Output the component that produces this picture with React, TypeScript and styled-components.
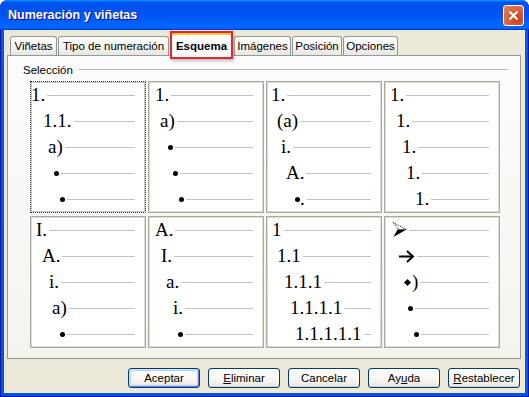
import React from 'react';
import styled, { createGlobalStyle } from 'styled-components';

const GlobalStyle = createGlobalStyle`
  html, body {
    margin: 0;
    padding: 0;
    background: #ffffff;
  }
  body {
    width: 529px;
    height: 397px;
    overflow: hidden;
  }
  * {
    box-sizing: border-box;
  }
`;

const Window = styled.div`
  width: 529px;
  height: 397px;
  display: flex;
  flex-direction: column;
  border-radius: 8px 8px 0 0;
  overflow: hidden;
  background: #0b52dc;
  box-shadow: inset 1px 0 #0019a8, inset -1px 0 #0019a8, inset 0 -1px #0019a8;
  font-family: 'Liberation Sans', Arial, sans-serif;
  font-size: 11px;
  color: #000000;
`;

const TitleBar = styled.div`
  flex: none;
  height: 30px;
  display: flex;
  align-items: center;
  justify-content: space-between;
  padding: 0 5px 0 8px;
  background: linear-gradient(180deg, #0997ff, #0053ee 8%, #0050ee 40%, #0066ff 88%, #0066ff 93%, #005bff 95%, #003dd7 96%, #003dd7);
`;

const Title = styled.div`
  color: #ffffff;
  font-weight: bold;
  font-size: 12.5px;
  text-shadow: 1px 1px #0f1089;
  padding-bottom: 1px;
`;

const CloseButton = styled.div`
  width: 21px;
  height: 21px;
  margin-top: 1px;
  border: 1px solid #ffffff;
  border-radius: 3px;
  display: flex;
  align-items: center;
  justify-content: center;
  background: radial-gradient(circle at 70% 70%, #c53f0f 0%, #db6444 55%, #e9845f 100%);
`;

const Frame = styled.div`
  flex: 1;
  display: flex;
  flex-direction: column;
  margin: 0 4px 4px 4px;
  padding: 0 4px 0 3px;
  background: #ece9d8;
`;

const TabStrip = styled.div`
  flex: none;
  height: 26px;
  margin-bottom: -1px;
  display: flex;
  align-items: flex-end;
  gap: 1px;
  padding-left: 3px;
  position: relative;
  z-index: 1;
`;

const Tab = styled.div<{ $w: number; $active?: boolean }>`
  position: relative;
  width: ${p => p.$w}px;
  height: ${p => (p.$active ? 24 : 19)}px;
  margin-bottom: ${p => (p.$active ? 0 : 1)}px;
  display: flex;
  align-items: center;
  justify-content: center;
  padding-top: ${p => (p.$active ? 2 : 0)}px;
  border: 1px solid #919b9c;
  border-bottom: none;
  border-radius: 3px 3px 0 0;
  white-space: nowrap;
  font-size: 11.5px;
  font-weight: ${p => (p.$active ? 'bold' : 'normal')};
  background: ${p => (p.$active ? '#fcfcfe' : 'linear-gradient(#ffffff, #f3f3ef 60%, #e6e5de)')};
  border-top-color: ${p => (p.$active ? '#e68b2c' : '#919b9c')};
  box-shadow: ${p => (p.$active ? 'inset 0 2px #ffc83c' : 'none')};
`;

// red annotation box drawn over the active tab
const Highlight = styled.span`
  position: absolute;
  left: -1px;
  right: -1px;
  top: -2px;
  bottom: -3px;
  border: 2px solid #e3262a;
  box-shadow: 1px 2px 3px rgba(0, 0, 0, 0.25);
  pointer-events: none;
`;

const Panel = styled.div`
  flex: 1;
  display: flex;
  flex-direction: column;
  border: 1px solid #919b9c;
  background: linear-gradient(#fcfcfe, #f4f3ee);
  padding: 7px 12px 0 15px;
`;

const FixedLine = styled.div`
  height: 13px;
  display: flex;
  align-items: center;
  gap: 6px;
  font-size: 11.5px;
`;

const FixedRule = styled.span`
  flex: 1;
  height: 1px;
  background: #b8b8b0;
`;

const Grid = styled.div`
  margin: 5px 0 0 7px;
  display: grid;
  grid-template-columns: repeat(4, 116px);
  grid-auto-rows: 132px;
  column-gap: 2px;
  row-gap: 3px;
`;

const Cell = styled.div<{ $selected?: boolean }>`
  background: #ffffff;
  border: 1px ${p => (p.$selected ? 'dotted #303030' : 'solid #aaa99f')};
  box-shadow: inset 0 0 0 1px ${p => (p.$selected ? '#c8c6bc' : '#dddbd2')};
`;

const Row = styled.div<{ $indent: number }>`
  height: 26px;
  display: flex;
  align-items: center;
  padding-left: ${p => p.$indent}px;
  padding-right: 10px;
`;

const Marker = styled.span`
  display: inline-flex;
  align-items: center;
  font-family: 'Liberation Serif', 'Times New Roman', serif;
  font-size: 19px;
  line-height: 26px;
  white-space: nowrap;
`;

const Rule = styled.span`
  flex: 1;
  height: 1px;
  margin-left: 2px;
  background: #c4c4c4;
`;

const Dot = styled.span`
  width: 5px;
  height: 5px;
  border-radius: 50%;
  background: #000000;
`;

const Diamond = styled.span`
  width: 5px;
  height: 5px;
  margin: 0 2px 0 1px;
  background: #000000;
  transform: rotate(45deg);
`;

const ButtonRow = styled.div`
  flex: none;
  height: 34px;
  display: flex;
  justify-content: flex-end;
  align-items: flex-start;
  gap: 8px;
  padding: 9px 1px 0 0;
`;

const Button = styled.button<{ $default?: boolean }>`
  width: 72px;
  height: 20px;
  padding: 0;
  border: 1px solid #003c74;
  border-radius: 3px;
  font-family: 'Liberation Sans', Arial, sans-serif;
  font-size: 11.5px;
  color: #000000;
  background: linear-gradient(#ffffff, #f5f4ef 70%, #e3e1d6);
  box-shadow: ${p =>
    p.$default
      ? 'inset 1px 1px #cee7ff, inset -1px -1px #6982ee, inset 0 0 0 2px #b9d1f7'
      : 'inset 0 -1px #d6d0c5'};
`;

const ArrowHead = () => (
  <svg width="15" height="16" viewBox="0 0 15 16">
    <path d="M1 0.5 L14.5 7.5 L7 8 Z" fill="none" stroke="#000" strokeWidth="0.9" strokeDasharray="1 1" />
    <path d="M5.5 7.6 L14.5 7.5 L1.5 15 Z" fill="#000" />
  </svg>
);

const Arrow = () => (
  <svg width="17" height="13" viewBox="0 0 17 13">
    <path d="M1 6.5 H15 M9 1 L15 6.5 L9 12" fill="none" stroke="#000" strokeWidth="2" />
  </svg>
);

type Item = [number, React.ReactNode];

const presets: Item[][] = [
  [[0, '1.'], [12, '1.1.'], [17, 'a)'], [23, <Dot />], [29, <Dot />]],
  [[6, '1.'], [11, 'a)'], [19, <Dot />], [24, <Dot />], [30, <Dot />]],
  [[4, '1.'], [10, '(a)'], [14, 'i.'], [19, 'A.'], [28, <><Dot />.</>]],
  [[5, '1.'], [11, '1.'], [17, '1.'], [21, '1.'], [30, '1.']],
  [[5, 'I.'], [11, 'A.'], [18, 'i.'], [21, 'a)'], [29, <Dot />]],
  [[6, 'A.'], [12, 'I.'], [17, 'a.'], [24, 'i.'], [29, <Dot />]],
  [[5, '1'], [10, '1.1'], [17, '1.1.1'], [23, '1.1.1.1'], [28, '1.1.1.1.1']],
  [[7, <ArrowHead />], [13, <Arrow />], [19, <><Diamond />)</>], [23, <Dot />], [29, <Dot />]],
];

const tabs: { label: string; w: number; active?: boolean }[] = [
  { label: 'Viñetas', w: 47 },
  { label: 'Tipo de numeración', w: 111 },
  { label: 'Esquema', w: 63, active: true },
  { label: 'Imágenes', w: 57 },
  { label: 'Posición', w: 50 },
  { label: 'Opciones', w: 55 },
];

export default function App() {
  return (
    <>
      <GlobalStyle />
      <Window>
        <TitleBar>
          <Title>Numeración y viñetas</Title>
          <CloseButton>
            <svg width="11" height="11" viewBox="0 0 11 11">
              <path d="M1.5 1.5 L9.5 9.5 M9.5 1.5 L1.5 9.5" stroke="#fff" strokeWidth="2.2" />
            </svg>
          </CloseButton>
        </TitleBar>
        <Frame>
          <TabStrip>
            {tabs.map(t => (
              <Tab key={t.label} $w={t.w} $active={t.active}>
                {t.label}
                {t.active && <Highlight />}
              </Tab>
            ))}
          </TabStrip>
          <Panel>
            <FixedLine>
              <span>Selección</span>
              <FixedRule />
            </FixedLine>
            <Grid>
              {presets.map((rows, i) => (
                <Cell key={i} $selected={i === 0}>
                  {rows.map(([indent, mark], j) => (
                    <Row key={j} $indent={indent}>
                      <Marker>{mark}</Marker>
                      <Rule />
                    </Row>
                  ))}
                </Cell>
              ))}
            </Grid>
          </Panel>
          <ButtonRow>
            <Button $default>Aceptar</Button>
            <Button><u>E</u>liminar</Button>
            <Button>Cancelar</Button>
            <Button>Ay<u>u</u>da</Button>
            <Button><u>R</u>establecer</Button>
          </ButtonRow>
        </Frame>
      </Window>
    </>
  );
}
